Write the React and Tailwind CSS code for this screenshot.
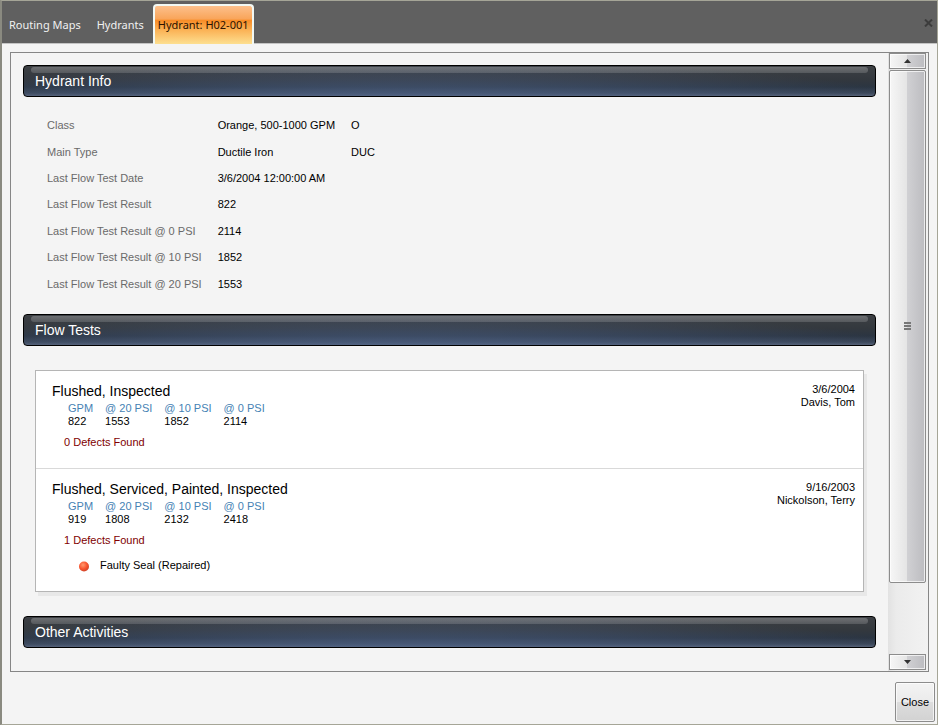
import React, { useState } from 'react';

const tabs = ['Routing Maps', 'Hydrants', 'Hydrant: H02-001'];

const hydrantInfo = [
  { label: 'Class', value: 'Orange, 500-1000 GPM', code: 'O' },
  { label: 'Main Type', value: 'Ductile Iron', code: 'DUC' },
  { label: 'Last Flow Test Date', value: '3/6/2004 12:00:00 AM' },
  { label: 'Last Flow Test Result', value: '822' },
  { label: 'Last Flow Test Result @ 0 PSI', value: '2114' },
  { label: 'Last Flow Test Result @ 10 PSI', value: '1852' },
  { label: 'Last Flow Test Result @ 20 PSI', value: '1553' },
];

const flowTests = [
  {
    title: 'Flushed, Inspected',
    date: '3/6/2004',
    inspector: 'Davis, Tom',
    readings: ['822', '1553', '1852', '2114'],
    defects: [],
  },
  {
    title: 'Flushed, Serviced, Painted, Inspected',
    date: '9/16/2003',
    inspector: 'Nickolson, Terry',
    readings: ['919', '1808', '2132', '2418'],
    defects: ['Faulty Seal (Repaired)'],
  },
];

const readingLabels = ['GPM', '@ 20 PSI', '@ 10 PSI', '@ 0 PSI'];

function TabBar({ active, onSelect }) {
  return (
    <nav className="flex h-[43px] items-end gap-0.5 border-b border-[#c4c4c4] bg-[#606060] pr-1 font-['Noto_Sans','Open_Sans',sans-serif] text-[11px] leading-4">
      {tabs.map((tab) => (
        <button
          key={tab}
          type="button"
          onClick={() => onSelect(tab)}
          className={
            tab === active
              ? '-mb-px h-10 whitespace-nowrap rounded-t-sm border-2 border-b-0 border-[#f1f8f4] bg-[linear-gradient(to_bottom,#fcc08c,#f9a55a_34%,#f88d28_38%,#fbb458_65%,#fddf90)] px-[3px] text-[#2b1200]'
              : 'h-10 whitespace-nowrap px-[7px] pt-1 text-[#f0f0f0]'
          }
        >
          {tab}
        </button>
      ))}
      <button type="button" aria-label="Close tab" className="mb-4 ml-auto text-[#3c3c3c]">
        <svg width="9" height="8" viewBox="0 0 9 8" fill="none" stroke="currentColor" strokeWidth="2">
          <path d="M1 0.5 L8 7.5 M8 0.5 L1 7.5" />
        </svg>
      </button>
    </nav>
  );
}

function SectionHeader({ children }) {
  return (
    <div className="h-8 rounded border border-black bg-[radial-gradient(ellipse_60%_150%_at_45%_130%,#4f648acc,#4f648a00),linear-gradient(to_bottom,#3d4044,#33383e_45%,#2b3542_70%,#3a4658_90%,#566176)] px-[7px] pt-px">
      <div className="h-[6px] rounded-sm bg-linear-to-b from-white/25 to-white/15" />
      <h2 className="px-1 text-[14px] leading-[17px] text-white">{children}</h2>
    </div>
  );
}

function InfoTable() {
  return (
    <table className="mt-[15px] ml-6 h-[185px] leading-4 text-black">
      <tbody>
        {hydrantInfo.map((row) => (
          <tr key={row.label}>
            <th scope="row" className="pr-4 text-left font-normal text-[#6a6a6a]">{row.label}</th>
            <td className="pr-4">{row.value}</td>
            <td>{row.code}</td>
          </tr>
        ))}
      </tbody>
    </table>
  );
}

function FlowTest({ test }) {
  return (
    <article className="flex justify-between border-b border-[#d9d9d9] pt-[11px] pr-2 pb-[19px] pl-4 leading-[13px] last:border-b-0">
      <div>
        <h3 className="text-[14px] leading-[18px]">{test.title}</h3>
        <table className="mt-0.5 ml-4">
          <thead>
            <tr>
              {readingLabels.map((label) => (
                <th key={label} scope="col" className="pr-3 text-left font-normal text-[#4682b4]">{label}</th>
              ))}
            </tr>
          </thead>
          <tbody>
            <tr>
              {test.readings.map((value, i) => (
                <td key={readingLabels[i]}>{value}</td>
              ))}
            </tr>
          </tbody>
        </table>
        <p className="mt-2 ml-3 text-[#800000]">{test.defects.length} Defects Found</p>
        {test.defects.length > 0 && (
          <ul className="mt-3 ml-[26px]">
            {test.defects.map((defect) => (
              <li key={defect} className="flex items-center gap-[10px]">
                <svg width="12" height="12" viewBox="0 0 12 12">
                  <defs>
                    <radialGradient id="defectDot" cx="40%" cy="35%" r="65%">
                      <stop offset="0" stopColor="#ff9a70" />
                      <stop offset="0.6" stopColor="#f9552f" />
                      <stop offset="1" stopColor="#d0452a" />
                    </radialGradient>
                  </defs>
                  <circle cx="6" cy="6.5" r="5" fill="url(#defectDot)" />
                </svg>
                {defect}
              </li>
            ))}
          </ul>
        )}
      </div>
      <div className="pt-px text-right">
        <p>{test.date}</p>
        <p>{test.inspector}</p>
      </div>
    </article>
  );
}

function ScrollButton({ label, path }) {
  return (
    <button
      type="button"
      aria-label={label}
      className="flex h-4 shrink-0 items-center justify-center border border-[#8c8c8c] bg-[linear-gradient(to_right,#f6f6f6,#e4e4e4_50%,#d0d0d3_50%,#bcbcc0)] inset-ring inset-ring-white/70"
    >
      <svg width="7" height="4" viewBox="0 0 7 4" fill="#333">
        <path d={path} />
      </svg>
    </button>
  );
}

function ScrollBar() {
  return (
    <div className="flex w-10 shrink-0 flex-col gap-px bg-linear-to-r from-[#e2e2e2] via-[#ebebeb] via-20% to-[#f2f2f2] pr-0.5 pb-px pl-px">
      <ScrollButton label="Scroll up" path="M0 4 L3.5 0 L7 4 Z" />
      <div className="flex grow-[513] items-center justify-center rounded-xs border border-[#8c8c8c] bg-[linear-gradient(to_right,#f6f6f6,#e4e4e4_50%,#d0d0d3_50%,#bcbcc0)] inset-ring inset-ring-white/70">
        <svg width="8" height="9" viewBox="0 0 8 9" stroke="#777" strokeWidth="2">
          <path d="M0 1 H7 M0 4 H7 M0 7 H7" />
        </svg>
      </div>
      <div className="grow-[70]" />
      <ScrollButton label="Scroll down" path="M0 0 L3.5 4 L7 0 Z" />
    </div>
  );
}

export default function App() {
  const [activeTab, setActiveTab] = useState('Hydrant: H02-001');

  return (
    <div className="flex min-h-screen flex-col border border-l-2 border-[#a5a597] border-l-[#8a8a80] bg-[#f4f4f4] font-['Liberation_Sans',Arial,sans-serif] text-[11px] text-black">
      <TabBar active={activeTab} onSelect={setActiveTab} />

      <main className="mx-2 mt-2 flex grow border border-[#868686]">
        <div className="grow p-3">
          <SectionHeader>Hydrant Info</SectionHeader>
          <InfoTable />

          <div className="mt-[17px]">
            <SectionHeader>Flow Tests</SectionHeader>
          </div>
          <div className="mx-3 mt-6 mb-6 border border-[#b5b5b5] bg-white shadow-[3px_4px_0_#e8e8e8]">
            {flowTests.map((test) => (
              <FlowTest key={test.date} test={test} />
            ))}
          </div>

          <SectionHeader>Other Activities</SectionHeader>
        </div>
        <ScrollBar />
      </main>

      <footer className="flex justify-end pt-[10px] pr-[2px] pb-[2px]">
        <button
          type="button"
          className="h-10 rounded-xs border border-[#8c8c8c] bg-[linear-gradient(to_bottom,#f3f3f3,#ebebeb_50%,#dddddd_50%,#d2d2d2)] px-[5px] inset-ring inset-ring-white/70"
        >
          Close
        </button>
      </footer>
    </div>
  );
}
